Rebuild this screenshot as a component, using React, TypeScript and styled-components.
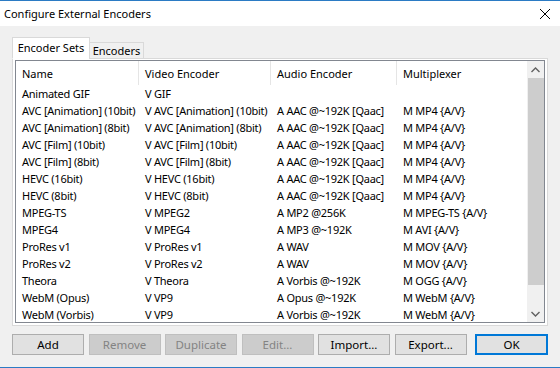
import React from "react";
import styled, { createGlobalStyle } from "styled-components";

const GlobalStyle = createGlobalStyle`
  html, body {
    margin: 0;
    padding: 0;
    background: #f0f0f0;
  }
  * {
    box-sizing: border-box;
  }
`;

type EncoderSet = {
  name: string;
  video: string;
  audio: string;
  mux: string;
};

const AAC = "A AAC @~192K [Qaac]";
const MP4 = "M MP4 {A/V}";

const encoderSets: EncoderSet[] = [
  { name: "Animated GIF", video: "V GIF", audio: "", mux: "" },
  { name: "AVC [Animation] (10bit)", video: "V AVC [Animation] (10bit)", audio: AAC, mux: MP4 },
  { name: "AVC [Animation] (8bit)", video: "V AVC [Animation] (8bit)", audio: AAC, mux: MP4 },
  { name: "AVC [Film] (10bit)", video: "V AVC [Film] (10bit)", audio: AAC, mux: MP4 },
  { name: "AVC [Film] (8bit)", video: "V AVC [Film] (8bit)", audio: AAC, mux: MP4 },
  { name: "HEVC (16bit)", video: "V HEVC (16bit)", audio: AAC, mux: MP4 },
  { name: "HEVC (8bit)", video: "V HEVC (8bit)", audio: AAC, mux: MP4 },
  { name: "MPEG-TS", video: "V MPEG2", audio: "A MP2 @256K", mux: "M MPEG-TS {A/V}" },
  { name: "MPEG4", video: "V MPEG4", audio: "A MP3 @~192K", mux: "M AVI {A/V}" },
  { name: "ProRes v1", video: "V ProRes v1", audio: "A WAV", mux: "M MOV {A/V}" },
  { name: "ProRes v2", video: "V ProRes v2", audio: "A WAV", mux: "M MOV {A/V}" },
  { name: "Theora", video: "V Theora", audio: "A Vorbis @~192K", mux: "M OGG {A/V}" },
  { name: "WebM (Opus)", video: "V VP9", audio: "A Opus @~192K", mux: "M WebM {A/V}" },
  { name: "WebM (Vorbis)", video: "V VP9", audio: "A Vorbis @~192K", mux: "M WebM {A/V}" },
];

const buttons = [
  { label: "Add", disabled: false },
  { label: "Remove", disabled: true },
  { label: "Duplicate", disabled: true },
  { label: "Edit...", disabled: true },
  { label: "Import...", disabled: false },
  { label: "Export...", disabled: false },
];

export default function App() {
  return (
    <>
      <GlobalStyle />
      <Window>
        <TitleBar>
          <span>Configure External Encoders</span>
          <CloseIcon width="12" height="12" viewBox="0 0 12 12">
            <path d="M1 1 L11 11 M11 1 L1 11" stroke="#000" strokeWidth="1" fill="none" />
          </CloseIcon>
        </TitleBar>

        <Body>
          <TabStrip>
            <Tab $active>Encoder Sets</Tab>
            <Tab>Encoders</Tab>
          </TabStrip>

          <TabPage>
            <ListView>
              <ListMain>
                <HeaderRow>
                  <HeaderCell>Name</HeaderCell>
                  <HeaderCell>Video Encoder</HeaderCell>
                  <HeaderCell>Audio Encoder</HeaderCell>
                  <HeaderCell $last>Multiplexer</HeaderCell>
                </HeaderRow>
                <Rows>
                  {encoderSets.map((s, i) => (
                    <Row key={i}>
                      <Cell>{s.name}</Cell>
                      <Cell>{s.video}</Cell>
                      <Cell>{s.audio}</Cell>
                      <Cell>{s.mux}</Cell>
                    </Row>
                  ))}
                </Rows>
              </ListMain>

              <ScrollBar>
                <ScrollArrow>
                  <svg width="9" height="6" viewBox="0 0 9 6">
                    <path d="M0.5 5 L4.5 1 L8.5 5" stroke="#606060" strokeWidth="1.4" fill="none" />
                  </svg>
                </ScrollArrow>
                <ScrollTrack>
                  <ScrollThumb />
                </ScrollTrack>
                <ScrollArrow>
                  <svg width="9" height="6" viewBox="0 0 9 6">
                    <path d="M0.5 1 L4.5 5 L8.5 1" stroke="#606060" strokeWidth="1.4" fill="none" />
                  </svg>
                </ScrollArrow>
              </ScrollBar>
            </ListView>
          </TabPage>

          <ButtonRow>
            {buttons.map((b) => (
              <Button key={b.label} disabled={b.disabled}>{b.label}</Button>
            ))}
            <Button $default>OK</Button>
          </ButtonRow>
        </Body>
      </Window>
    </>
  );
}

const Window = styled.div`
  width: 560px;
  height: 368px;
  display: flex;
  flex-direction: column;
  background: #f0f0f0;
  border-top: 1px solid #2b7bc4;
  border-bottom: 1px solid #2b7bc4;
  font-family: "Noto Sans", "Open Sans", sans-serif;
  font-size: 11px;
  color: #000;
  overflow: hidden;
`;

const TitleBar = styled.div`
  height: 25px;
  flex: none;
  background: #fff;
  display: flex;
  align-items: center;
  justify-content: space-between;
  padding: 0 9px 0 4px;
  font-size: 11px;
`;

const CloseIcon = styled.svg`
  display: block;
`;

const Body = styled.div`
  flex: 1;
  display: flex;
  flex-direction: column;
  padding: 11px 12px 0 12px;
`;

const TabStrip = styled.div`
  display: flex;
  align-items: flex-end;
  height: 22px;
  position: relative;
  z-index: 1;
  margin-bottom: -1px;
`;

const Tab = styled.div<{ $active?: boolean }>`
  width: ${(p) => (p.$active ? "78px" : "55px")};
  height: ${(p) => (p.$active ? "22px" : "17px")};
  padding-bottom: ${(p) => (p.$active ? "2px" : "0")};
  display: flex;
  align-items: center;
  justify-content: center;
  background: ${(p) => (p.$active ? "#fff" : "#f0f0f0")};
  border: 1px solid #d9d9d9;
  border-bottom: ${(p) => (p.$active ? "1px solid #fff" : "1px solid #d9d9d9")};
  margin-left: ${(p) => (p.$active ? "0" : "-1px")};
  white-space: nowrap;
`;

const TabPage = styled.div`
  height: 268px;
  flex: none;
  background: #fff;
  border: 1px solid #d9d9d9;
  padding: 1px 2px 2px 2px;
  display: flex;
`;

const ListView = styled.div`
  flex: 1;
  display: flex;
  border: 1px solid #828790;
  background: #fff;
  overflow: hidden;
`;

const ListMain = styled.div`
  flex: 1;
  display: flex;
  flex-direction: column;
  overflow: hidden;
`;

const columns = "123px 132px 126px 1fr";

const HeaderRow = styled.div`
  display: grid;
  grid-template-columns: ${columns};
  height: 24px;
  flex: none;
`;

const HeaderCell = styled.div<{ $last?: boolean }>`
  display: flex;
  align-items: center;
  padding-left: 6px;
  border-right: ${(p) => (p.$last ? "none" : "1px solid #e5e5e5")};
  white-space: nowrap;
`;

const Rows = styled.div`
  flex: 1;
  overflow: hidden;
`;

const Row = styled.div`
  display: grid;
  grid-template-columns: ${columns};
  height: 17px;
  align-items: center;
`;

const Cell = styled.div`
  padding-left: 6px;
  white-space: nowrap;
  overflow: hidden;
  line-height: 17px;
  letter-spacing: -0.25px;
`;

const ScrollBar = styled.div`
  width: 17px;
  flex: none;
  display: flex;
  flex-direction: column;
  background: #f0f0f0;
`;

const ScrollArrow = styled.div`
  height: 17px;
  flex: none;
  display: flex;
  align-items: center;
  justify-content: center;
`;

const ScrollTrack = styled.div`
  flex: 1;
  display: flex;
  flex-direction: column;
  padding: 0 0 0 1px;
`;

const ScrollThumb = styled.div`
  height: 207px;
  background: #cdcdcd;
`;

const ButtonRow = styled.div`
  display: flex;
  gap: 4.5px;
  margin-top: 8px;
`;

const Button = styled.button<{ $default?: boolean }>`
  width: ${(p) => (p.$default ? "73px" : "72px")};
  height: 21px;
  margin-left: ${(p) => (p.$default ? "4px" : "0")};
  padding: 0;
  font-family: inherit;
  font-size: 11.5px;
  color: #000;
  background: #e1e1e1;
  border: ${(p) => (p.$default ? "2px solid #0078d7" : "1px solid #adadad")};

  &:disabled {
    color: #838383;
    background: #cccccc;
    border-color: #bfbfbf;
  }
`;
